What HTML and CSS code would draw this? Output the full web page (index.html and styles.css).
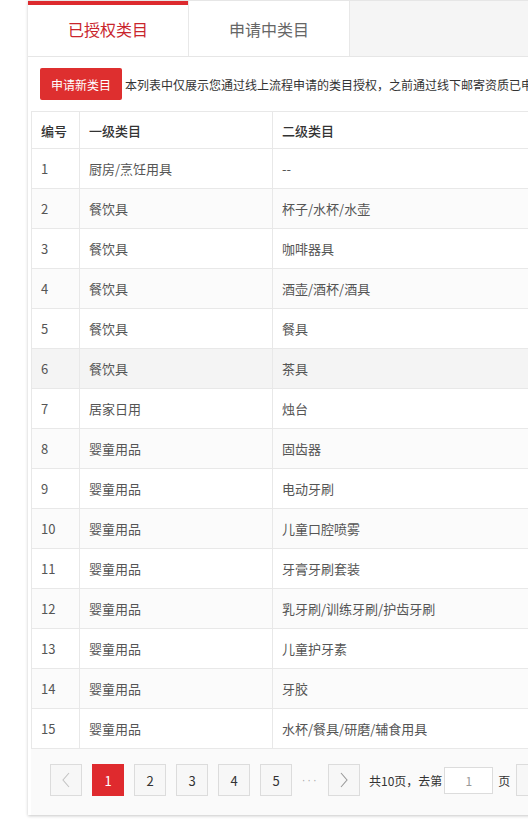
FILE: index.html
```html
<!DOCTYPE html>
<html lang="zh-CN">
<head>
<meta charset="utf-8">
<title>类目管理</title>
<link rel="stylesheet" href="styles.css">
</head>
<body>
<div class="page">
  <div class="card">
    <div class="tabs">
      <div class="tab active">已授权类目</div>
      <div class="tab">申请中类目</div>
      <div class="tab-fill"></div>
    </div>
    <div class="panel">
      <div class="toolbar">
        <button class="btn-apply">申请新类目</button>
        <span class="note">本列表中仅展示您通过线上流程申请的类目授权，之前通过线下邮寄资质已申请的类目授权不在此列表中展示</span>
      </div>
      <div class="grid">
        <div class="row head"><div class="c">编号</div><div class="c">一级类目</div><div class="c">二级类目</div></div>
        <div class="row"><div class="c">1</div><div class="c">厨房/烹饪用具</div><div class="c">--</div></div>
        <div class="row even"><div class="c">2</div><div class="c">餐饮具</div><div class="c">杯子/水杯/水壶</div></div>
        <div class="row"><div class="c">3</div><div class="c">餐饮具</div><div class="c">咖啡器具</div></div>
        <div class="row even"><div class="c">4</div><div class="c">餐饮具</div><div class="c">酒壶/酒杯/酒具</div></div>
        <div class="row"><div class="c">5</div><div class="c">餐饮具</div><div class="c">餐具</div></div>
        <div class="row hover"><div class="c">6</div><div class="c">餐饮具</div><div class="c">茶具</div></div>
        <div class="row"><div class="c">7</div><div class="c">居家日用</div><div class="c">烛台</div></div>
        <div class="row even"><div class="c">8</div><div class="c">婴童用品</div><div class="c">固齿器</div></div>
        <div class="row"><div class="c">9</div><div class="c">婴童用品</div><div class="c">电动牙刷</div></div>
        <div class="row even"><div class="c">10</div><div class="c">婴童用品</div><div class="c">儿童口腔喷雾</div></div>
        <div class="row"><div class="c">11</div><div class="c">婴童用品</div><div class="c">牙膏牙刷套装</div></div>
        <div class="row even"><div class="c">12</div><div class="c">婴童用品</div><div class="c">乳牙刷/训练牙刷/护齿牙刷</div></div>
        <div class="row"><div class="c">13</div><div class="c">婴童用品</div><div class="c">儿童护牙素</div></div>
        <div class="row even"><div class="c">14</div><div class="c">婴童用品</div><div class="c">牙胶</div></div>
        <div class="row"><div class="c">15</div><div class="c">婴童用品</div><div class="c">水杯/餐具/研磨/辅食用具</div></div>
      </div>
      <div class="pager">
        <span class="pg disabled"><svg width="10" height="16" viewBox="0 0 10 16"><polyline points="8,1 2,8 8,15" fill="none" stroke="#c4c4c4" stroke-width="1.1"/></svg></span>
        <span class="pg current">1</span>
        <span class="pg">2</span>
        <span class="pg">3</span>
        <span class="pg">4</span>
        <span class="pg">5</span>
        <span class="dots">···</span>
        <span class="pg"><svg width="10" height="16" viewBox="0 0 10 16"><polyline points="2,1 8,8 2,15" fill="none" stroke="#999" stroke-width="1.1"/></svg></span>
        <span class="total">共10页，去第</span>
        <input class="goto" type="text" value="1">
        <span class="unit">页</span>
        <button class="pg go">确定</button>
      </div>
    </div>
  </div>
</div>
</body>
</html>
```
FILE: styles.css
```css
html, body {
  margin: 0;
  padding: 0;
  background: #fff;
  overflow: hidden;
}
body {
  font-family: "Noto Sans CJK SC", "Noto Sans", sans-serif;
  color: #555;
}
.page {
  width: 528px;
  height: 825px;
  overflow: hidden;
}
.card {
  margin-left: 28px;
  width: 760px;
  box-shadow: 0 1px 3px rgba(0,0,0,0.22);
}
.tabs {
  display: flex;
  height: 56px;
  background: #f5f5f5;
  border-top: 1px solid #e6e6e6;
  box-sizing: border-box;
}
.tab {
  width: 161px;
  background: #fff;
  border-right: 1px solid #e8e8e8;
  display: flex;
  align-items: center;
  justify-content: center;
  font-size: 16px;
  color: #666;
  box-sizing: border-box;
}
.tab.active {
  color: #c9252c;
  box-shadow: inset 0 4px 0 #dd2a2e;
}
.tab-fill { flex: 1; }
.panel {
  border-top: 1px solid #e6e6e6;
  padding: 0 3px;
  background: #fff;
}
.toolbar {
  display: flex;
  align-items: center;
  padding: 11px 9px;
  white-space: nowrap;
  overflow: hidden;
}
.btn-apply {
  height: 32px;
  width: 82px;
  border: none;
  border-radius: 2px;
  background: #de2f2f;
  color: #fff;
  font-family: inherit;
  font-size: 12px;
  padding: 0;
  flex-shrink: 0;
}
.note {
  margin-left: 3px;
  font-size: 12px;
  color: #333;
}
.grid {
  border-top: 1px solid #e8e8e8;
  border-left: 1px solid #e8e8e8;
}
.row {
  display: grid;
  grid-template-columns: 48px 193px 1fr;
  height: 40px;
  border-bottom: 1px solid #e8e8e8;
  box-sizing: border-box;
  font-size: 13px;
  color: #555;
}
.row.head {
  height: 37px;
  color: #333;
  font-weight: 500;
}
.row.even { background: #fbfbfb; }
.row.hover { background: #f4f4f4; }
.c {
  display: flex;
  align-items: center;
  padding-left: 9px;
  border-right: 1px solid #e8e8e8;
  white-space: nowrap;
}
.pager {
  display: flex;
  align-items: center;
  background: #fafafa;
  padding: 15px 0 19px 19px;
  font-size: 12px;
  color: #333;
  white-space: nowrap;
}
.pg {
  width: 32px;
  height: 32px;
  box-sizing: border-box;
  border: 1px solid #dcdcdc;
  background: #f7f7f7;
  display: flex;
  align-items: center;
  justify-content: center;
  margin-right: 10px;
  font-size: 13px;
  color: #333;
  font-family: inherit;
  flex-shrink: 0;
}
.pg.current {
  background: #df2a2e;
  border-color: #df2a2e;
  color: #fff;
}
.dots {
  width: 16px;
  margin-right: 10px;
  color: #aaa;
  font-family: "DejaVu Sans", sans-serif;
  font-size: 10px;
  letter-spacing: 2.4px;
  overflow: visible;
}
.total { margin-left: -1px; }
.goto {
  width: 49px;
  height: 27px;
  box-sizing: border-box;
  border: 1px solid #dcdcdc;
  background: #fff;
  margin-left: 2px;
  text-align: center;
  font-family: inherit;
  font-size: 12px;
  color: #999;
  padding: 0;
}
.unit { margin-left: 5px; margin-right: 6px; }
.pg.go { width: 60px; padding: 0; }
```
